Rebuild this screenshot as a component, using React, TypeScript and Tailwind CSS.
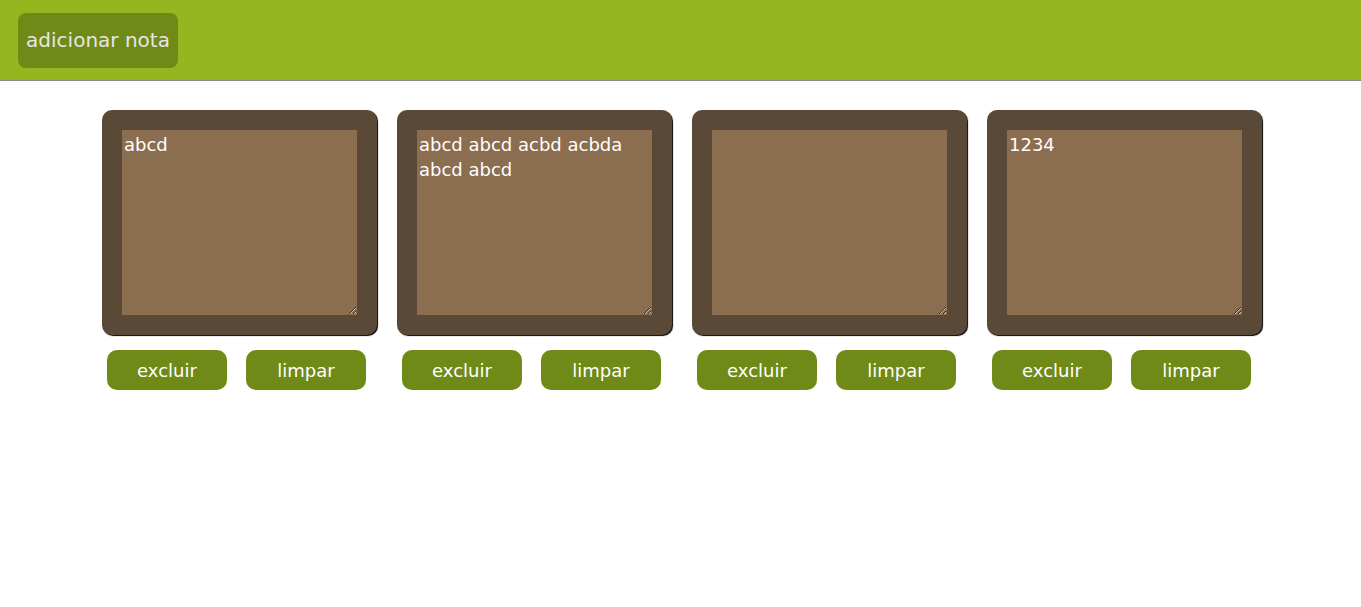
import React from "react";

const notes = ["abcd", "abcd abcd acbd acbda abcd abcd", "", "1234"];

const Note = ({ text }: { text: string }) => {
  const [value, setValue] = React.useState(text);
  return (
    <div className="flex flex-col">
      <div className="h-[225px] w-[275px] rounded-[10px] bg-[#5a4937] p-5 shadow-[1px_1px_1px_#000]">
        <textarea
          value={value}
          onChange={(e) => setValue(e.target.value)}
          className="block h-full w-full bg-[#8b6d4f] p-[2px] text-[18px] leading-[25px] text-white outline-none"
        />
      </div>
      <div className="ml-[5px] mt-[15px] flex gap-[19px]">
        <button className="h-10 w-[120px] rounded-[10px] bg-[#6f8a16] text-[18px] text-white">
          excluir
        </button>
        <button
          onClick={() => setValue("")}
          className="h-10 w-[120px] rounded-[10px] bg-[#6f8a16] text-[18px] text-white"
        >
          limpar
        </button>
      </div>
    </div>
  );
};

export default function App() {
  return (
    <div className="min-h-screen bg-white font-['DejaVu_Sans',sans-serif]">
      <header className="flex h-[81px] items-center border-b border-[#8a8a8a] bg-[#96b51f] pl-[18px]">
        <button className="h-[55px] w-40 rounded-lg bg-[#708a18] text-[20px] text-[#e6e6e6]">
          adicionar nota
        </button>
      </header>
      <main className="mt-[29px] flex justify-center gap-5 pl-[3px]">
        {notes.map((n, i) => (
          <Note key={i} text={n} />
        ))}
      </main>
    </div>
  );
}
